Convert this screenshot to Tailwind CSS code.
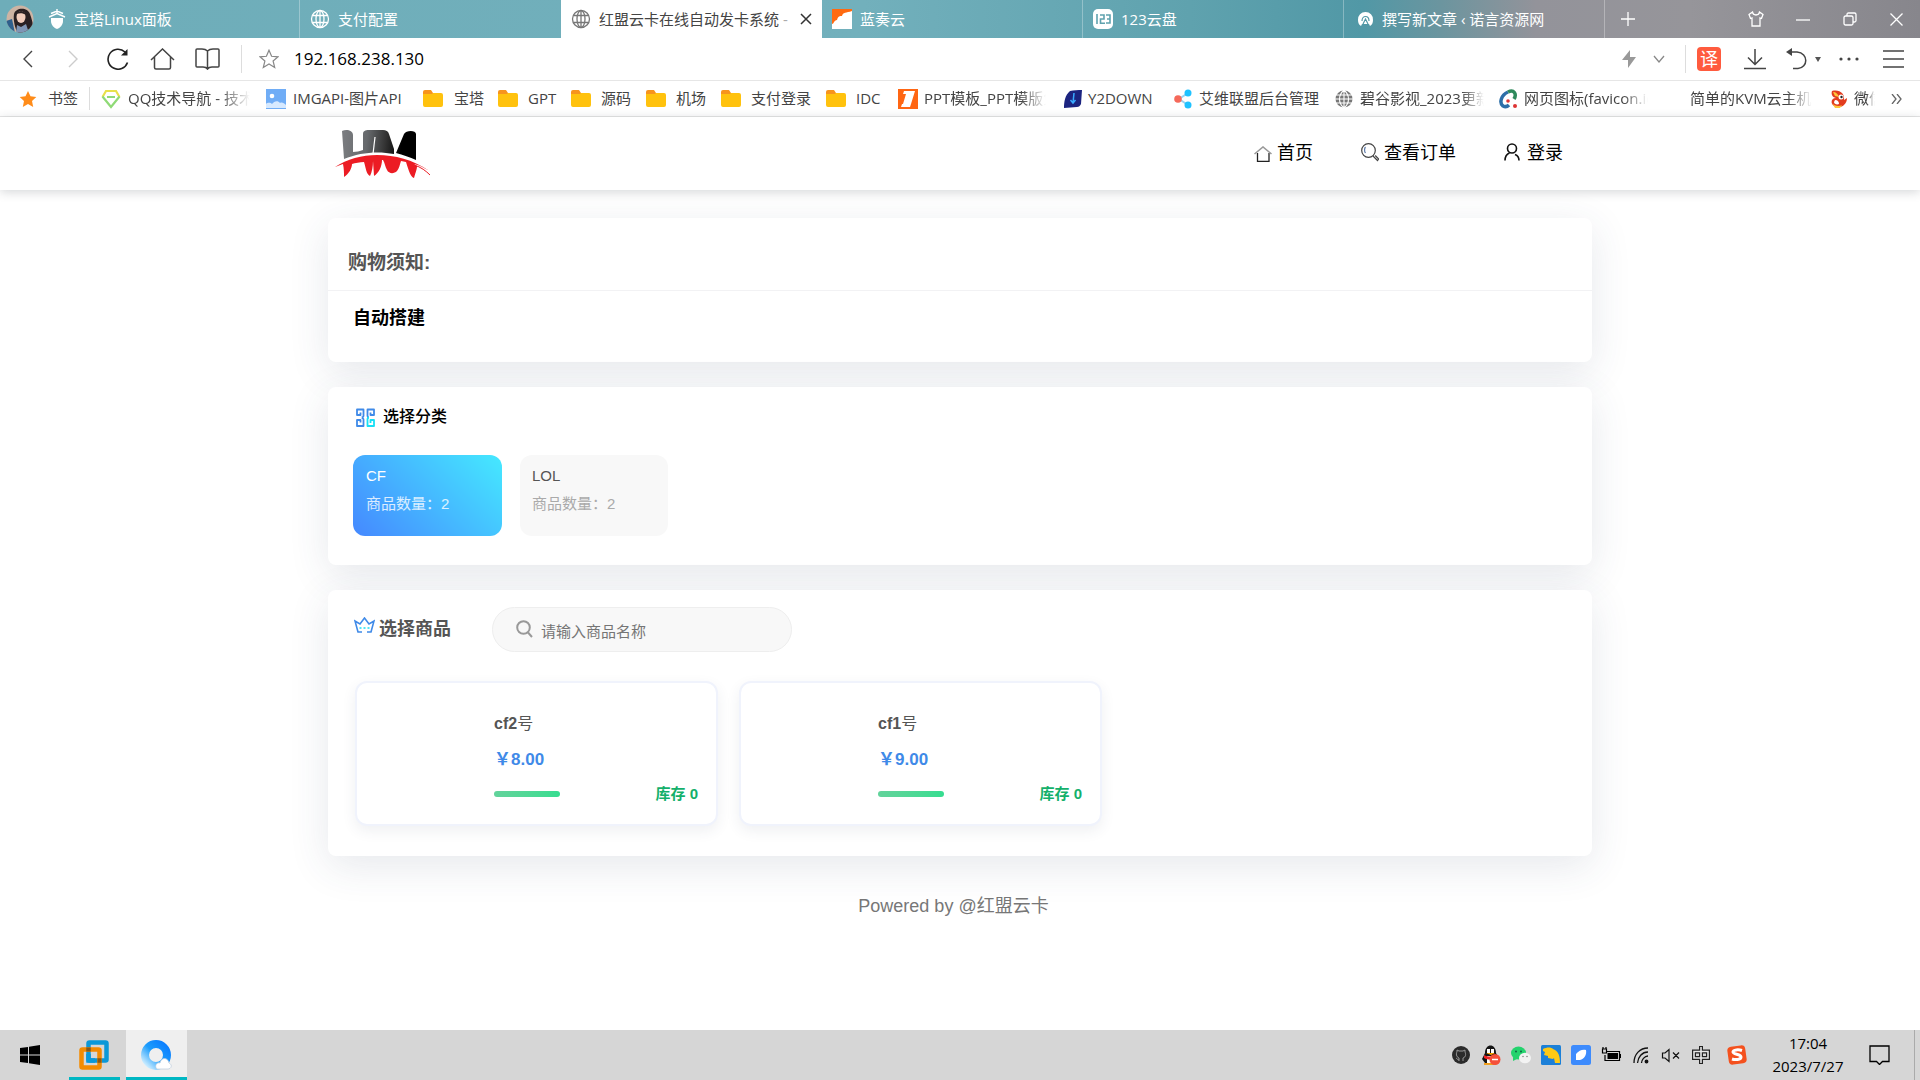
<!DOCTYPE html>
<html lang="zh-CN">
<head>
<meta charset="utf-8">
<title>红盟云卡在线自动发卡系统</title>
<script src="https://cdn.jsdelivr.net/npm/@tailwindcss/browser@4"></script>
</head>
<body class="min-h-screen flex flex-col bg-white overflow-x-hidden font-['Liberation_Sans','Noto_Sans_CJK_SC',sans-serif]">

<svg class="hidden" aria-hidden="true">
  <symbol id="globe" viewBox="0 0 20 20"><g fill="none" stroke="currentColor" stroke-width="1.3"><circle cx="10" cy="10" r="8.5"/><ellipse cx="10" cy="10" rx="4" ry="8.5"/><path d="M10 1.5v17M2.5 6.5h15M2.5 13.5h15"/></g></symbol>
  <symbol id="folder" viewBox="0 0 20 20"><path fill="#f7941d" d="M0 3a2 2 0 0 1 2-2h6l2 3v4H0z"/><path fill="#ffc20e" d="M0 5h9l1-1h8a2 2 0 0 1 2 2v10a2 2 0 0 1-2 2H2a2 2 0 0 1-2-2z"/></symbol>
</svg>

<div class="font-['Open_Sans','Noto_Sans_CJK_SC',sans-serif] text-[15px] text-[#444]">
  <!-- Tab strip -->
  <div class="flex h-[38px] items-stretch text-white bg-[linear-gradient(90deg,#6eadb9_0%,#72b0bc_45%,#5fa2ae_62%,#5198a6_71%,#6b959f_75%,#93939a_80%,#96959a_88%,#87868c_100%)]">
    <div class="w-[39px] shrink-0 flex items-center justify-center">
      <svg class="w-7 h-7" viewBox="0 0 28 28"><defs><clipPath id="av"><circle cx="14" cy="14" r="13.5"/></clipPath></defs><g clip-path="url(#av)"><rect width="28" height="28" fill="#cdb4a4"/><path fill="#2e5f8c" d="M0 16l6-2 3 14H0z"/><path fill="#2a2023" d="M8 9c1-6 13-8 16 0 2 6 4 12 3 19H12c-3-4-5-13-4-19z"/><ellipse cx="15" cy="12" rx="4.5" ry="6" fill="#f2cdbd"/><path fill="#2a2023" d="M10 9c3-4 8-4 10 1-3-2-6-2-10-1z"/><path fill="#7f95b5" d="M11 20l4 2 5-3 3 9H10z"/></g></svg>
    </div>
    <div class="flex-1 max-w-[261px] min-w-0 flex items-center gap-2 pl-[9px] border-r border-white/30">
      <svg class="w-[18px] h-5 shrink-0" viewBox="0 0 18 20" fill="#fff"><path d="M3 9h12v3c0 4-3 7-6 8-3-1-6-4-6-8z"/><path fill="none" d="M3 4.500L9 2l6 2.500M1 8l8-3.500L17 8M9 0v4" stroke="#fff" stroke-width="1.400"/></svg>
      <span class="truncate">宝塔Linux面板</span>
    </div>
    <div class="flex-1 max-w-[261px] min-w-0 flex items-center gap-2 pl-[10px]">
      <svg class="w-5 h-5 shrink-0"><use href="#globe"/></svg>
      <span class="truncate">支付配置</span>
    </div>
    <div class="flex-1 max-w-[261px] min-w-0 flex items-center pl-[10px] bg-white text-[#444]">
      <svg class="w-5 h-5 mr-2 shrink-0 text-[#777]"><use href="#globe"/></svg>
      <span class="flex-1 whitespace-nowrap overflow-hidden">红盟云卡在线自动发卡系统<span class="text-[#aaa]"> -</span></span>
      <button aria-label="关闭标签页" class="w-8 h-full flex items-center justify-center"><svg class="w-3 h-3" viewBox="0 0 12 12" stroke="#333" stroke-width="1.500"><path d="M1 1l10 10M11 1L1 11"/></svg></button>
    </div>
    <div class="flex-1 max-w-[261px] min-w-0 flex items-center gap-2 pl-[10px] border-r border-white/30">
      <svg class="w-5 h-5 shrink-0" viewBox="0 0 20 20"><rect width="20" height="20" fill="#ff6a10"/><path fill="#fff" d="M0 20v-5c2 0 2-4 5-4 1-4 3-4 5-4 1-4 4-3 10-5v18z"/></svg>
      <span class="truncate">蓝奏云</span>
    </div>
    <div class="flex-1 max-w-[261px] min-w-0 flex items-center gap-2 pl-[10px] border-r border-white/30">
      <svg class="w-5 h-5 shrink-0" viewBox="0 0 20 20"><rect width="20" height="20" rx="5" fill="#fff"/><path fill="none" stroke="#5fa2ae" stroke-width="1.600" d="M4 5v10M7 6h4v4H7.500v4.200H12M13 6h4v8h-4M14 10h3"/></svg>
      <span class="truncate">123云盘</span>
    </div>
    <div class="flex-1 max-w-[261px] min-w-0 flex items-center gap-2 pl-[13px] border-r border-white/30">
      <svg class="w-[17px] h-[17px] shrink-0" viewBox="0 0 17 17"><path fill="#fff" d="M8.500 1A7.500 7.500 0 0 0 1 9c0 3 1 5 3 6l1-2h7l1 2c2-1 3-3 3-6a7.500 7.500 0 0 0-7.500-8z"/><path fill="none" stroke="#5198a6" stroke-width="1.200" d="M5 10c0-6 7-6 7 0M6 13l2.500-5 2.500 5"/></svg>
      <span class="truncate">撰写新文章 ‹ 诺言资源网</span>
    </div>
    <button aria-label="新建标签页" class="w-[46px] flex items-center justify-center"><svg class="w-[14px] h-[14px]" viewBox="0 0 14 14" stroke="#fff" stroke-width="1.300"><path d="M7 0v14M0 7h14"/></svg></button>
    <div class="ml-auto flex shrink-0">
      <button aria-label="皮肤" class="w-[47px] flex items-center justify-center"><svg class="w-4 h-4" viewBox="0 0 16 16" fill="none" stroke="#fff" stroke-width="1.300"><path d="M4.500 1L1 3.500l1.500 4L4 7v8h8V7l1.500.5 1.500-4L11.500 1C11 5 5 5 4.500 1z"/></svg></button>
      <button aria-label="最小化" class="w-[47px] flex items-center justify-center"><svg class="w-[14px] h-3" viewBox="0 0 14 12" stroke="#fff" stroke-width="1.300"><path d="M0 7h14"/></svg></button>
      <button aria-label="还原" class="w-[47px] flex items-center justify-center"><svg class="w-[14px] h-[14px]" viewBox="0 0 14 14" fill="none" stroke="#fff" stroke-width="1.300"><rect x="1" y="4" width="9" height="9" rx="1.500"/><path d="M4 4V2.500C4 1.500 4.500 1 5.500 1h6c1 0 1.500.5 1.500 1.500v6c0 1-.5 1.500-1.500 1.500H10"/></svg></button>
      <button aria-label="关闭" class="w-[47px] flex items-center justify-center"><svg class="w-[13px] h-[13px]" viewBox="0 0 13 13" stroke="#fff" stroke-width="1.300"><path d="M.5.5l12 12M12.500.5l-12 12"/></svg></button>
    </div>
  </div>

  <!-- Address bar -->
  <div class="flex h-[43px] items-center border-b border-[#e6e6e6] pl-[5px] pr-[4px] text-[#444]">
    <button aria-label="后退" class="w-[45px] flex justify-center"><svg class="w-[10px] h-[18px]" viewBox="0 0 10 18" fill="none" stroke="currentColor" stroke-width="1.400"><path d="M9 1L1 9l8 8"/></svg></button>
    <button aria-label="前进" class="w-[45px] flex justify-center text-[#ccc]"><svg class="w-[10px] h-[18px]" viewBox="0 0 10 18" fill="none" stroke="currentColor" stroke-width="1.400"><path d="M1 1l8 8-8 8"/></svg></button>
    <button aria-label="刷新" class="w-[45px] flex justify-center"><svg class="w-[22px] h-[22px]" viewBox="0 0 22 22" fill="none" stroke="#222" stroke-width="1.600"><path d="M20.500 14.500A10 10 0 1 1 18 4"/><path d="M20.500 1v6.500H14z" fill="#222" stroke="none"/></svg></button>
    <button aria-label="主页" class="w-[45px] flex justify-center"><svg class="w-[25px] h-[22px]" viewBox="0 0 25 22" fill="none" stroke="currentColor" stroke-width="1.500"><path d="M1 12L12.500 1 24 12M4.500 9v10.500c0 1 .5 1.500 1.500 1.500h13c1 0 1.500-.5 1.500-1.500V9"/></svg></button>
    <button aria-label="阅读" class="w-[45px] flex justify-center"><svg class="w-[25px] h-[22px]" viewBox="0 0 25 22" fill="none" stroke="currentColor" stroke-width="1.500"><path d="M12.500 3C11 1.500 9 1 7 1H2c-.7 0-1 .3-1 1v16c0 .7.300 1 1 1h6c2 0 3.500.5 4.500 2 1-1.500 2.500-2 4.500-2h6c.7 0 1-.3 1-1V2c0-.7-.3-1-1-1h-5c-2 0-4 .5-5.500 2zM12.500 3v18"/></svg></button>
    <div class="w-px h-7 bg-[#ddd] ml-[11px]"></div>
    <button aria-label="收藏" class="ml-[17px] mr-[15px]"><svg class="w-5 h-5" viewBox="0 0 20 20" fill="none" stroke="#888" stroke-width="1.200"><path d="M10 1.200l2.600 6.100 6.400.5-4.900 4.200 1.600 6.500L10 15l-5.700 3.500 1.600-6.500L1 7.800l6.400-.5z"/></svg></button>
    <input aria-label="地址" value="192.168.238.130" class="flex-1 min-w-0 text-[17px] text-black outline-none">
    <div class="flex items-center shrink-0">
      <svg class="w-[14px] h-[20px]" viewBox="0 0 14 20"><path fill="#999" d="M8 1L0 11h6v8l8-11H8z"/></svg>
      <svg class="w-3 h-2 ml-[17px]" viewBox="0 0 12 8" fill="none" stroke="#888" stroke-width="1.300"><path d="M1 1l5 6 5-6"/></svg>
      <div class="w-px h-7 bg-[#ddd] ml-5"></div>
      <button class="ml-[11px] w-6 h-6 rounded bg-[#ff5b3e] text-white text-[18px] leading-6">译</button>
      <button aria-label="下载" class="ml-[23px]"><svg class="w-[22px] h-[22px]" viewBox="0 0 22 22" fill="none" stroke="currentColor" stroke-width="1.500"><path d="M11 1v15M4 9.500l7 7 7-7M0 20.500h22"/></svg></button>
      <button aria-label="恢复" class="ml-5 flex items-center gap-2"><svg class="w-[21px] h-[22px]" viewBox="0 0 21 22" fill="none" stroke="currentColor" stroke-width="1.500"><path d="M3 4h8c12 1 11 16 1 16.500H7"/><path d="M6 0v8L0 4z" fill="currentColor" stroke="none"/></svg><svg class="w-[6px] h-[5px]" viewBox="0 0 6 5"><path fill="#555" d="M0 0h6L3 5z"/></svg></button>
      <button aria-label="更多" class="ml-[18px]"><svg class="w-5 h-1" viewBox="0 0 20 4" fill="#444"><circle cx="2" cy="2" r="1.600"/><circle cx="10" cy="2" r="1.600"/><circle cx="18" cy="2" r="1.600"/></svg></button>
      <button aria-label="菜单" class="ml-6 mr-3"><svg class="w-[21px] h-[18px]" viewBox="0 0 21 18" stroke="currentColor" stroke-width="1.500"><path d="M0 1h21M0 9h21M0 17h21"/></svg></button>
    </div>
  </div>

  <!-- Bookmarks bar -->
  <div class="flex h-9 items-center border-b border-[#e6e6e6] pl-[18px] whitespace-nowrap overflow-hidden">
    <a href="#" class="w-[72px] shrink-0 flex items-center gap-[10px] mr-[11px] border-r border-[#ddd]"><svg class="w-5 h-5 shrink-0" viewBox="0 0 20 20"><path fill="#ff8c1a" d="M10 2l2.500 5.300 5.800.7-4.300 4 1.200 6L10 15l-5.200 3L6 12 1.700 8l5.800-.7z"/></svg>书签</a>
    <a href="#" class="w-[165px] shrink-0 flex items-center gap-[7px]"><svg class="w-5 h-5 shrink-0" viewBox="0 0 20 20" fill="none" stroke-width="2.200"><path stroke="#e8e04a" d="M1.500 8L5 2h10l3.500 6"/><path stroke="#8fda76" d="M1.500 7.500L10 18l8.500-10.500M6 8h8"/></svg><span class="w-[122px] overflow-hidden [mask-image:linear-gradient(to_right,#000_75%,transparent)]">QQ技术导航 - 技术</span></a>
    <a href="#" class="w-[157px] shrink-0 flex items-center gap-[7px]"><svg class="w-5 h-5 shrink-0" viewBox="0 0 20 20"><rect width="20" height="20" y="0" fill="#70adf6"/><circle cx="6" cy="7" r="2.300" fill="#fff"/><path fill="#d6e9ff" d="M0 15c2-2 5-1 6 0 2-3 6-4 8-1 2-1 4 0 6 2v3H0z"/></svg>IMGAPI-图片API</a>
    <a href="#" class="w-[75px] shrink-0 flex items-center gap-[11px]"><svg class="w-5 h-5 shrink-0"><use href="#folder"/></svg>宝塔</a>
    <a href="#" class="w-[73px] shrink-0 flex items-center gap-[10px]"><svg class="w-5 h-5 shrink-0"><use href="#folder"/></svg>GPT</a>
    <a href="#" class="w-[75px] shrink-0 flex items-center gap-[10px]"><svg class="w-5 h-5 shrink-0"><use href="#folder"/></svg>源码</a>
    <a href="#" class="w-[75px] shrink-0 flex items-center gap-[10px]"><svg class="w-5 h-5 shrink-0"><use href="#folder"/></svg>机场</a>
    <a href="#" class="w-[105px] shrink-0 flex items-center gap-[10px]"><svg class="w-5 h-5 shrink-0"><use href="#folder"/></svg>支付登录</a>
    <a href="#" class="w-[72px] shrink-0 flex items-center gap-[10px]"><svg class="w-5 h-5 shrink-0"><use href="#folder"/></svg>IDC</a>
    <a href="#" class="w-[165px] shrink-0 flex items-center gap-[6px]"><svg class="w-5 h-5 shrink-0" viewBox="0 0 20 20"><rect width="20" height="20" fill="#ff6613"/><path fill="#fff" d="M6 2h11l-4 13-1 3H3l1-3h1l3-10H5z"/></svg><span class="w-[122px] overflow-hidden [mask-image:linear-gradient(to_right,#000_80%,transparent)]">PPT模板_PPT模版免费</span></a>
    <a href="#" class="w-[111px] shrink-0 flex items-center gap-[5px]"><svg class="w-5 h-5 shrink-0" viewBox="0 0 20 20"><path fill="#1c2480" d="M7 2c4-1 8-1 12-1l-1 14c-1 2-2 3-4 3L1 19c0-6 1-13 6-17z"/><path fill="none" stroke="#39a9ff" stroke-width="1.500" d="M11 4l-1 10M7.500 11l2.500 3 2.500-3"/></svg>Y2DOWN</a>
    <a href="#" class="w-[161px] shrink-0 flex items-center gap-[6px]"><svg class="w-[19px] h-5 shrink-0" viewBox="0 0 19 20"><path stroke="#9ad3f0" stroke-width="2" fill="none" d="M14 4l-9 6 9 6"/><circle cx="4" cy="10" r="3.800" fill="#f5695a"/><circle cx="14" cy="4" r="3.500" fill="#1fc2ff"/><circle cx="14" cy="16" r="3.500" fill="#1fc2ff"/></svg>艾维联盟后台管理</a>
    <a href="#" class="w-[164px] shrink-0 flex items-center gap-[7px]"><svg class="w-[18px] h-[18px] shrink-0" viewBox="0 0 18 18"><circle cx="9" cy="9" r="8.500" fill="#777"/><path fill="none" stroke="#fff" stroke-width="1.100" d="M9 0v18M0 9h18M1 5h16M1 13h16M9 0C3 5 3 13 9 18M9 0c6 5 6 13 0 18"/></svg><span class="w-[124px] overflow-hidden [mask-image:linear-gradient(to_right,#000_82%,transparent)]">碧谷影视_2023更新</span></a>
    <a href="#" class="w-[191px] shrink-0 flex items-center gap-[5px]"><svg class="w-5 h-5 shrink-0" viewBox="0 0 20 20" fill="none" stroke-width="3.500"><path stroke="#2d6fa8" d="M9 3C2 6 0 14 4 17c2 1 4 1 6-1"/><path stroke="#2f8a5c" d="M9 3c6-3 9 2 6 7"/><circle cx="9" cy="12" r="1.800" fill="#d33" stroke="none"/><circle cx="16" cy="17" r="2" fill="#d33" stroke="none"/></svg><span class="w-[124px] overflow-hidden [mask-image:linear-gradient(to_right,#000_80%,transparent)]">网页图标(favicon.ico)</span></a>
    <a href="#" class="w-[139px] shrink-0"><span class="block w-[122px] overflow-hidden [mask-image:linear-gradient(to_right,#000_80%,transparent)]">简单的KVM云主机</span></a>
    <a href="#" class="w-[46px] shrink-0 flex items-center gap-[5px]"><svg class="w-5 h-5 shrink-0" viewBox="0 0 20 20"><path fill="#e23c1e" d="M3 2c8-2 13 3 12 9l3-2c0 6-5 10-10 9-7-1-7-9-1-9C3 8 2 5 3 2z"/><path fill="#ffc53a" d="M4 3c3 0 5 2 6 5l-4-1zM3 14c2 3 7 4 10 2l-2 3H6z"/><circle cx="12" cy="8" r="2.500" fill="#fff"/><circle cx="12.500" cy="8" r="1.200" fill="#222"/><path fill="#fff" d="M6 11c3 0 4 2 4 4-2 1-5 0-5-2z"/></svg><span class="w-[21px] overflow-hidden [mask-image:linear-gradient(to_right,#000_60%,transparent)]">微信</span></a>
    <button aria-label="更多书签" class="ml-auto mr-[18px]"><svg class="w-[11px] h-[10px]" viewBox="0 0 11 10" fill="none" stroke="#666" stroke-width="1.300"><path d="M1 0l4 5-4 5M6 0l4 5-4 5"/></svg></button>
  </div>
</div>

<!-- Site header -->
<header class="shadow-[0_2px_10px_rgba(40,50,60,0.2)] relative">
  <div class="max-w-[1264px] mx-auto h-[73px] flex items-center justify-between pl-[6px] pr-[29px]">
    <a href="#" aria-label="HM" class="block">
      <svg class="w-[98px] h-[52px]" viewBox="0 0 98 52">
        <defs><linearGradient id="hm" gradientUnits="userSpaceOnUse" x1="8" y1="0" x2="82" y2="8"><stop offset="0" stop-color="#7c7e81"/><stop offset=".35" stop-color="#66696c"/><stop offset=".6" stop-color="#333"/><stop offset=".82" stop-color="#000"/></linearGradient></defs>
        <path fill="url(#hm)" d="M8 3c4-2 11-1 11 4v17c3 0 7-1 10-2V6c0-3 2-4 6-4h14c3 0 5 1 6 4l5 15v5c-15-3-34-2-50 5zM62 25l8-19c2-4 12-4 12 0v26c-6-3-13-5-20-7z"/>
        <path stroke="#fff" stroke-width="1.200" d="M41 9l-2 17"/>
        <path fill="#ec1c24" d="M1 39c12-8 27-12 42-12 18 0 36 5 51 15-6-3-9-5-14-6l3 2c0 3-1 5-3 12-3-1-5-6-8-16l-5-1c-1 3-2 8-4 10-3 3-8 3-10-1-2-3-2-7-4-10h-1c0 6-3 13-8 16l-1-15c0 5-1 11-3 15-4-2-4-8-6-14-4 0-9 1-12 2 0 4-3 10-8 13 0-4 0-8-1-13-3 1-5 2-8 3z"/>
        <path fill="none" stroke="#ec1c24" stroke-width="1" d="M80 37c7 2 12 6 16 10"/>
      </svg>
    </a>
    <nav class="flex items-center gap-12 text-[18px] text-black">
      <a href="#" class="flex items-center gap-[5px]"><svg class="w-[18px] h-4" viewBox="0 0 18 16" fill="none" stroke-width="1.300"><path stroke="#222" d="M3.500 7v8.300h11.500V7"/><path stroke="#999" stroke-width="1.600" d="M.5 8L9 1l8.500 7"/></svg>首页</a>
      <a href="#" class="flex items-center gap-[5px]"><svg class="w-[18px] h-[19px] mb-[3px]" viewBox="0 0 18 19" fill="none" stroke="#444" stroke-width="1.200"><circle cx="7.500" cy="7.500" r="6.800"/><path stroke="#5a78a8" d="M4.500 10c-1.500-2-1-5 0-6"/><path d="M12 13l4.500 4.500 1.200-1.500-3.500-3.500"/></svg>查看订单</a>
      <a href="#" class="flex items-center gap-[7px]"><svg class="w-4 h-[18px] mb-[3px]" viewBox="0 0 16 18" fill="none" stroke="#111" stroke-width="1.600"><circle cx="8" cy="5.500" r="4.500"/><path d="M1 17.500c0-4 2-6.500 4.500-7.500M15 17.500c0-3-1.500-5-4-6"/></svg>登录</a>
    </nav>
  </div>
</header>

<main class="flex-1 w-full max-w-[1264px] mx-auto pt-7">
  <section class="h-36 rounded-lg bg-white shadow-[0_10px_40px_rgba(50,65,95,0.12)]">
    <h2 class="h-[73px] border-b border-[#f2f2f4] pl-5 pt-[17px] text-[19px] leading-[56px] font-bold text-[#555]">购物须知:</h2>
    <p class="pl-[25px] pt-[14px] text-[18px] leading-[26px] font-bold text-black">自动搭建</p>
  </section>

  <section class="relative mt-[25px] h-[178px] rounded-lg bg-white px-[25px] pt-[17px] shadow-[0_10px_40px_rgba(50,65,95,0.12)]">
    <h2 class="flex items-center gap-2 pl-[3px] h-[26px] text-[16px] font-medium text-black">
      <svg class="w-[19px] h-[19px]" viewBox="0 0 19 19" fill="none" stroke="#3f8ae8" stroke-width="1.800" stroke-linejoin="round"><path d="M4.500 4.500V7H1V1.500h6.500V8C7.500 9 6.500 9 6 9.500M4.500 14.500V12H1v6h6.500v-6.500c0-1-1-1-1.500-2M14.500 4.500V7H18V1.500h-6.500V8c0 1 .5 1.500 1.500 1.500"/><path stroke="#18dff5" d="M13 9.500c-1 0-1.500 1-1.500 2V18H18v-6h-3.500v3"/></svg>
      选择分类
    </h2>
    <div class="flex gap-[18px] mt-[25px]">
      <button class="w-[149px] h-[81px] rounded-xl pl-[13px] pt-[7px] text-left flex flex-col items-start bg-linear-[45deg,#4588ff,#45e9ff] text-[15px] text-white">
        <span class="leading-7">CF</span><span class="leading-7 text-white/80">商品数量：2</span>
      </button>
      <button class="w-[148px] h-[81px] rounded-xl pl-3 pt-[7px] text-left flex flex-col items-start bg-[#f8f8f8] text-[15px] text-[#555]">
        <span class="leading-7">LOL</span><span class="leading-7 text-[#aaa]">商品数量：2</span>
      </button>
    </div>
  </section>

  <section class="relative mt-[25px] rounded-lg bg-white pt-[17px] pb-[30px] px-[26px] shadow-[0_10px_40px_rgba(50,65,95,0.12)]">
    <div class="flex items-center">
      <h2 class="flex items-center gap-1 w-[138px] text-[18px] leading-6 font-bold text-[#555] pb-[2px]">
        <svg class="w-[21px] h-4 mb-2" viewBox="0 0 21 16" fill="none" stroke="#3f8ae8" stroke-width="1.600"><path d="M8 15H4L1 4l5 3 4.500-6L15 7l5-3-3 11h-4"/><path stroke="#18dff5" stroke-dasharray="2 2" d="M5.500 11h10"/></svg>
        选择商品
      </h2>
      <label class="flex items-center w-[300px] h-[45px] rounded-full border border-[#eee] bg-[#f8f8f8] pl-[23px]">
        <svg class="w-[17px] h-[18px] shrink-0 mb-[2px]" viewBox="0 0 17 18" fill="none" stroke="#999" stroke-width="2"><circle cx="7.500" cy="7.500" r="6.300"/><path d="M12 12.500l4 4.500"/></svg>
        <input type="text" placeholder="请输入商品名称" aria-label="搜索商品" class="ml-2 mt-[6px] w-[220px] bg-transparent text-[15px] outline-none placeholder:text-[#757575]">
      </label>
    </div>
    <div class="grid grid-cols-[repeat(auto-fill,363px)] gap-[21px] mt-[29px] ml-px">
      <article class="h-[145px] rounded-xl border-2 border-[#f0f3fc] bg-white pl-[137px] pr-[18px] pt-[26px] shadow-[0_5px_14px_rgba(50,60,95,0.08)]">
        <h3 class="text-[16px] leading-[30px] font-bold text-[#555]">cf2<span class="font-normal">号</span></h3>
        <p class="mt-[6px] text-[17px] leading-[30px] font-bold text-[#3f8ae8]">￥8.00</p>
        <div class="mt-[7px] flex items-center justify-between h-6"><div class="w-[66px] h-[6px] rounded-full bg-linear-to-r from-[#62d39b] to-[#35dd90]"></div><span class="text-[15px] font-bold text-[#14b06b]">库存 0</span></div>
      </article>
      <article class="h-[145px] rounded-xl border-2 border-[#f0f3fc] bg-white pl-[137px] pr-[18px] pt-[26px] shadow-[0_5px_14px_rgba(50,60,95,0.08)]">
        <h3 class="text-[16px] leading-[30px] font-bold text-[#555]">cf1<span class="font-normal">号</span></h3>
        <p class="mt-[6px] text-[17px] leading-[30px] font-bold text-[#3f8ae8]">￥9.00</p>
        <div class="mt-[7px] flex items-center justify-between h-6"><div class="w-[66px] h-[6px] rounded-full bg-linear-to-r from-[#62d39b] to-[#35dd90]"></div><span class="text-[15px] font-bold text-[#14b06b]">库存 0</span></div>
      </article>
    </div>
  </section>

  <footer class="pt-9 pr-[13px] text-center text-[18px] leading-7 text-[#777]">Powered by @红盟云卡</footer>
</main>

<!-- Windows taskbar -->
<div class="flex h-[50px] items-stretch bg-[#d6d6d6] text-black font-['Open_Sans','Noto_Sans_CJK_SC',sans-serif]">
  <button aria-label="开始" class="w-[60px] mr-[9px] flex items-center justify-center"><svg class="w-5 h-5" viewBox="0 0 20 20"><path d="M0 3l8-1v7.500H0zM9 1.800L20 0v9.500H9zM0 10.500h8V18l-8-1zM9 10.500h11V20L9 18.200z"/></svg></button>
  <button aria-label="VMware" class="w-[51px] mr-[6px] border-b-[3px] border-[#00b7c3] flex items-center justify-center"><svg class="w-[30px] h-[30px] mt-[3px] mr-[2px]" viewBox="0 0 30 30" fill="none" stroke-width="4.500"><rect x="9.500" y="2.500" width="18" height="18" rx="1" stroke="#0a98d8"/><rect x="2.500" y="9.500" width="18" height="18" rx="1" stroke="#f38b00"/><path stroke="#0a98d8" d="M9.500 14v6.500H16"/><path stroke="#86591c" d="M9.500 7.500v4M18.500 20.500h4"/></svg></button>
  <button aria-label="QQ浏览器" class="w-[61px] border-b-[3px] border-[#00b7c3] bg-[#efefef] flex items-center justify-center"><svg class="w-[31px] h-[31px] mt-[3px]" viewBox="0 0 31 31"><defs><linearGradient id="qb" x1="1" y1="0" x2="0" y2="1"><stop offset="0" stop-color="#0a7cff"/><stop offset=".5" stop-color="#1c9dfc"/><stop offset="1" stop-color="#d8f2ff"/></linearGradient></defs><circle cx="15" cy="15" r="11" fill="none" stroke="url(#qb)" stroke-width="8"/><path fill="#fff" stroke="#bccbdd" stroke-width=".7" d="M16 29c-3-3 0-7 3-6 1-6 8-6 9 0 4 2 2 6-1 6z"/></svg></button>
  <div class="ml-auto flex items-center gap-[10px]">
    <svg class="w-5 h-5" viewBox="0 0 20 20"><circle cx="10" cy="10" r="9" fill="#2b2b2b"/><path fill="none" stroke="#999" d="M8 16v-3c-3-1-3-5-2-6V5l2 1h4l2-1v2c1 2 1 5-2 6v3M8 15c-2 0-2-2-3-2"/></svg>
    <svg class="w-5 h-5" viewBox="0 0 20 20"><path fill="#f0a020" d="M3 18h12v2H3z"/><path fill="#151515" d="M4 8c0-10 11-10 11 0l3 6-3 4H4l-3-4z"/><path fill="#fff" d="M6 11h7v7H6zM6 4h3v4H6zM10 4h3v4h-3z"/><path fill="#f7a600" d="M5 8h9l-4 2z"/><path fill="#e22" d="M3 10c4 2 9 2 13 0v3c-4 2-9 2-13 0z"/><circle cx="14" cy="14.500" r="5.500" fill="#f5503a"/><path stroke="#fff" stroke-width="1.500" d="M11 14.500h6"/></svg>
    <svg class="w-5 h-5" viewBox="0 0 20 20"><ellipse cx="7.500" cy="8" rx="7.500" ry="6.500" fill="#24d36d"/><path fill="#24d36d" d="M2 12l0 4 4-2z"/><circle cx="5" cy="6.500" r="1" fill="#164"/><circle cx="10" cy="6.500" r="1" fill="#164"/><ellipse cx="14" cy="13" rx="6" ry="5.300" fill="#f3f3f3"/><circle cx="12" cy="11.500" r=".8" fill="#888"/><circle cx="16" cy="11.500" r=".8" fill="#888"/></svg>
    <svg class="w-5 h-5" viewBox="0 0 20 20"><rect width="20" height="20" rx="1.500" fill="#1c80d8"/><path fill="#ffc914" d="M2 4c4-2 8-2 10 0 6 2 7 8 7 14h-5l-1-5-1 1-5-1v-2l-4-1 1-3-2-1z"/></svg>
    <svg class="w-5 h-5" viewBox="0 0 20 20"><rect width="20" height="20" rx="2.500" fill="#3d8bfd"/><path fill="#fff" d="M5 15V9c3-4 7-5 10-4 1 5-2 9-6 10z"/></svg>
    <svg class="w-5 h-5" viewBox="0 0 20 20"><path d="M6.500 8h10.500v6H6.500z"/><path fill="none" stroke="#000" stroke-width="1.200" d="M6 6.500h12.500v9H4V10M1.500 4v4h4V4zM2 4V2M5 4V2M19.500 9v4"/></svg>
    <svg class="w-5 h-5" viewBox="0 0 20 20" fill="none" stroke="#111" stroke-width="1.300"><path d="M3 18C3 9 9 3 17 3M6.500 18C7 12 11 7 17 7M10.500 18c0-3 3-7 6.500-7"/><circle cx="15.500" cy="16.500" r="1.300" fill="#111"/></svg>
    <svg class="w-5 h-5" viewBox="0 0 20 20" fill="none" stroke="#111" stroke-width="1.200"><path d="M1.500 8v5H4l4 3.500v-12L4 8zM12 7.500l6 6M18 7.500l-6 6"/></svg>
    <svg class="w-5 h-5" viewBox="0 0 20 20" fill="none"><path stroke="#222" stroke-width="4" d="M3 6.500h14v6.500H3zM10 1v18"/><path stroke="#e8e8e8" stroke-width="1.600" d="M3 6.500h14v6.500H3zM10 2v16"/></svg>
    <svg class="w-5 h-5 ml-[6px]" viewBox="0 0 20 20"><rect x="1" y="1" width="18" height="18" rx="4" fill="#f4511e" transform="rotate(-8 10 10)"/><path fill="none" stroke="#fff" stroke-width="3" d="M15 5.500c-3-1-9-1-9 1.500s8 2 8 5-6 3-9 2"/></svg>
    <div class="w-[102px] text-center text-[15px] leading-[23px]"><div>17:04</div><div>2023/7/27</div></div>
    <button aria-label="通知" class="mr-[24px]"><svg class="w-[21px] h-5" viewBox="0 0 21 20" fill="none" stroke="#000" stroke-width="1.300"><path d="M1 1h19v15.500h-6.500l-3 3-3-3H1z"/></svg></button>
  </div>
  <div class="w-[6px] border-l border-[#aaa]"></div>
</div>
</body>
</html>
